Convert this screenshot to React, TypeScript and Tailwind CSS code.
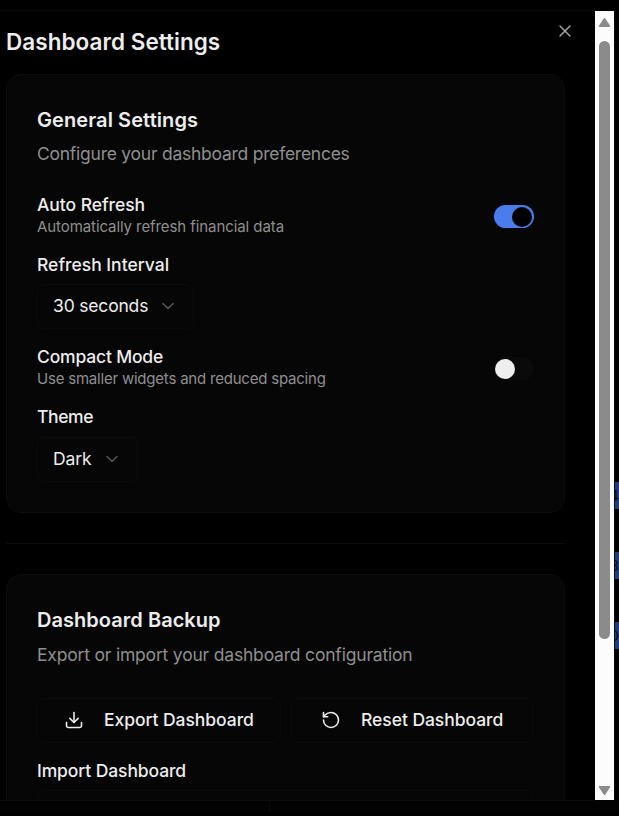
import type { ReactNode } from "react";
import { X, ChevronDown, Download, RotateCcw } from "lucide-react";

function Card({ className, children }: { className: string; children: ReactNode }) {
  return (
    <section className={`ml-[6px] w-[559px] shrink-0 rounded-[15px] border border-[#0c0c0c] bg-[#060606] px-[30px] pt-[31px] ${className}`}>
      {children}
    </section>
  );
}

function Label({ className, children }: { className: string; children: ReactNode }) {
  return <div className={`h-[22px] text-[17.5px] leading-[22px] font-medium whitespace-nowrap text-[#ededed] ${className}`}>{children}</div>;
}

function Select({ className, children }: { className: string; children: ReactNode }) {
  return (
    <button className={`flex h-[45px] items-center justify-between rounded-[8px] border border-[#0b0b0b] pr-[15px] pl-[15px] text-[17.5px] whitespace-nowrap text-[#ededed] ${className}`}>
      <span>{children}</span>
      <ChevronDown className="mb-px size-[20px] text-[#5c5c5c]" strokeWidth={1.6} />
    </button>
  );
}

function Switch({ on }: { on: boolean }) {
  return (
    <span className={`mt-[2px] flex h-[23px] w-[40px] items-center rounded-full ${on ? "justify-end bg-[#4a7cec] pr-[2px]" : "justify-start bg-[#0a0a0a] pl-[1px]"}`}>
      <span className={`size-[20px] rounded-full ${on ? "bg-black" : "bg-[#eeeeee]"}`} />
    </span>
  );
}

function Scrollbar() {
  return (
    <div className="flex w-[19px] flex-col items-center bg-[#fcfcfc]">
      <svg className="mt-[6px] h-[11px] w-[13px]" viewBox="0 0 13 11">
        <path d="M6.5 1.8 11.4 9.2H1.6Z" fill="#8b8b8b" stroke="#8b8b8b" strokeWidth="1.6" strokeLinejoin="round" />
      </svg>
      <div className="mt-[13px] h-[598px] w-[11px] rounded-full bg-[#8b8b8b]" />
      <svg className="mt-auto mb-[4px] h-[11px] w-[13px]" viewBox="0 0 13 11">
        <path d="M6.5 9.2 11.4 1.8H1.6Z" fill="#8b8b8b" stroke="#8b8b8b" strokeWidth="1.6" strokeLinejoin="round" />
      </svg>
    </div>
  );
}

function Chip({ className, children }: { className: string; children: ReactNode }) {
  return (
    <div className={`flex h-[27px] w-[4px] shrink-0 justify-end overflow-hidden bg-[#1f3c7c] text-[15px] leading-[27px] text-[#080c16] ${className}`}>
      <span>{children}</span>
    </div>
  );
}

export default function App() {
  return (
    <div className="flex h-[816px] w-[619px] flex-col overflow-hidden bg-black font-['Inter','Liberation_Sans',sans-serif]">
      <div className="flex h-[801px] shrink-0 pt-[10px]">
        <main className="relative flex h-[791px] w-[595px] flex-col overflow-hidden border-y border-[#0b0b0b]">
          <h1 className="mt-[16px] ml-[6px] h-[30px] shrink-0 text-[22.5px] leading-[30px] font-semibold tracking-[0.04px] whitespace-nowrap text-[#ededed]">
            Dashboard Settings
          </h1>
          <button className="absolute top-[10px] left-[555px]" aria-label="Close">
            <X className="size-[20px] text-[#a6a6a6]" strokeWidth={1.7} />
          </button>

          <Card className="mt-[17px] h-[439px]">
            <h2 className="h-[28px] text-[20px] leading-[28px] font-semibold tracking-[0.09px] text-[#ededed]">General Settings</h2>
            <p className="mt-[8px] h-[24px] text-[17.5px] leading-[24px] tracking-[-0.25px] text-[#8f8f8f]">Configure your dashboard preferences</p>
            <div className="mt-[28px] flex items-center justify-between">
              <div>
                <Label className="tracking-[-0.05px]">Auto Refresh</Label>
                <p className="h-[21px] text-[15px] leading-[22px] tracking-[-0.08px] text-[#8f8f8f]">Automatically refresh financial data</p>
              </div>
              <Switch on />
            </div>
            <Label className="mt-[17px] tracking-[0px]">Refresh Interval</Label>
            <Select className="mt-[8px] w-[157px] tracking-[-0.18px]">30 seconds</Select>
            <div className="mt-[17px] flex items-center justify-between">
              <div>
                <Label className="tracking-[-0.18px]">Compact Mode</Label>
                <p className="h-[21px] text-[15px] leading-[22px] tracking-[-0.21px] text-[#8f8f8f]">Use smaller widgets and reduced spacing</p>
              </div>
              <Switch on={false} />
            </div>
            <Label className="mt-[17px] tracking-[-0.4px]">Theme</Label>
            <Select className="mt-[9px] w-[101px] tracking-[-0.1px]">Dark</Select>
          </Card>

          <hr className="mt-[30px] ml-[6px] w-[559px] shrink-0 border-[#0c0c0c]" />

          <Card className="mt-[30px] h-[320px]">
            <h2 className="h-[28px] text-[20px] leading-[28px] font-semibold tracking-[0.04px] text-[#ededed]">Dashboard Backup</h2>
            <p className="mt-[9px] h-[24px] text-[17.5px] leading-[24px] tracking-[-0.19px] text-[#8f8f8f]">Export or import your dashboard configuration</p>
            <div className="mt-[31px] flex justify-between">
              <button className="flex h-[45px] w-[244px] items-center rounded-[8px] border border-[#0b0b0b] pl-[26px] text-[17.5px] font-medium whitespace-nowrap text-[#ededed]">
                <Download className="mb-[2px] size-[20px]" strokeWidth={1.9} />
                <span className="ml-[20px] tracking-[-0.05px]">Export Dashboard</span>
              </button>
              <button className="flex h-[45px] w-[243px] items-center rounded-[8px] border border-[#0b0b0b] pl-[29px] text-[17.5px] font-medium whitespace-nowrap text-[#ededed]">
                <RotateCcw className="mb-[2px] size-[20px]" strokeWidth={1.9} />
                <span className="ml-[20px] tracking-[-0.05px]">Reset Dashboard</span>
              </button>
            </div>
            <Label className="mt-[17px] tracking-[-0.1px]">Import Dashboard</Label>
            <div className="mt-[8px] h-[45px] rounded-[8px] border border-[#0b0b0b]" />
          </Card>
        </main>
        <div className="flex h-[790px] w-[19px] shrink-0 pt-[1px]">
          <Scrollbar />
        </div>
        <aside className="flex w-[5px] flex-col border-l border-[#0b0b0b]">
          <Chip className="mt-[472px]">4</Chip>
          <Chip className="mt-[43px]">8</Chip>
          <Chip className="mt-[43px]">0</Chip>
        </aside>
      </div>
      <footer className="flex h-[11px] w-[619px] bg-[#020202]">
        <div className="w-[270px] border-r border-[#0b0b0b]" />
      </footer>
    </div>
  );
}
